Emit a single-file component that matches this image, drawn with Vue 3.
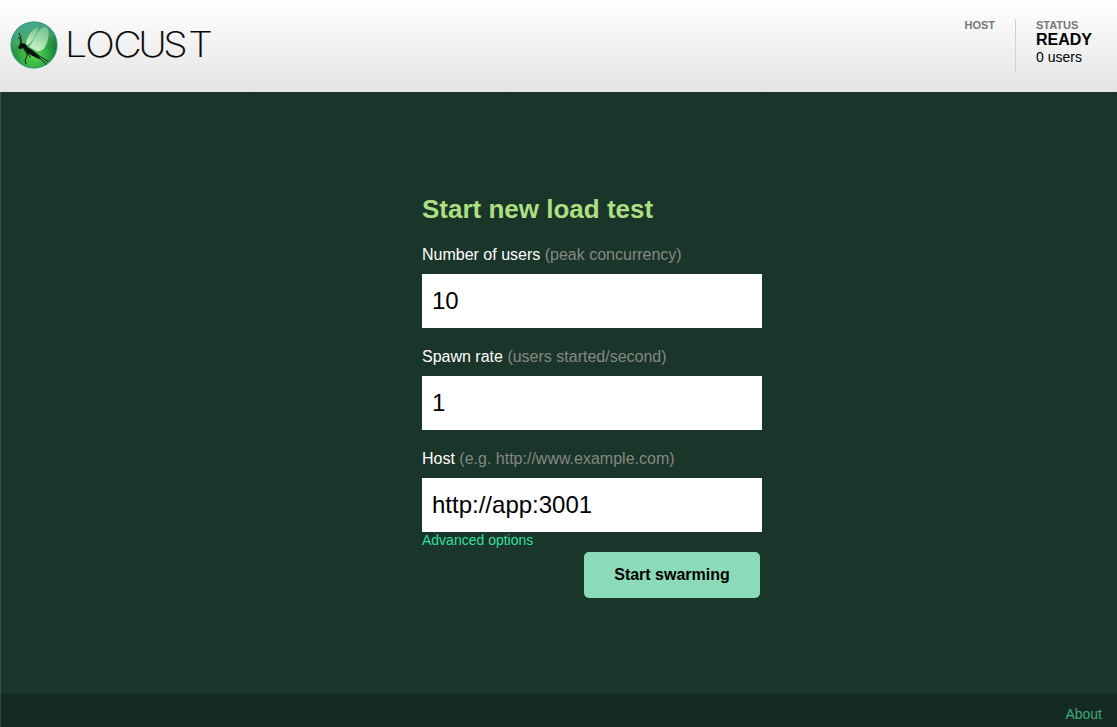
<script setup>
import { reactive } from 'vue'

const fields = reactive([
  { id: 'users', label: 'Number of users', hint: '(peak concurrency)', value: '10' },
  { id: 'rate', label: 'Spawn rate', hint: '(users started/second)', value: '1' },
  { id: 'host', label: 'Host', hint: '(e.g. http://www.example.com)', value: 'http://app:3001' },
])
</script>

<template>
  <div class="page">
    <header class="top">
      <svg class="logo" width="204" height="52" viewBox="0 0 204 52" role="img" aria-label="Locust">
        <defs>
          <radialGradient id="orb" cx="0.5" cy="0.72" r="0.68">
            <stop offset="0" stop-color="#58d850" />
            <stop offset="0.4" stop-color="#35ae43" />
            <stop offset="0.75" stop-color="#187b35" />
            <stop offset="1" stop-color="#0c5a3c" />
          </radialGradient>
          <linearGradient id="sheen" x1="0.3" y1="0" x2="0.55" y2="1">
            <stop offset="0" stop-color="#48b9aa" stop-opacity="0.9" />
            <stop offset="0.4" stop-color="#68bd7b" stop-opacity="0.55" />
            <stop offset="0.65" stop-color="#36b548" stop-opacity="0" />
          </linearGradient>
          <linearGradient id="wing" x1="0.7" y1="0" x2="0.3" y2="1">
            <stop offset="0" stop-color="#a9e3b6" stop-opacity="0.55" />
            <stop offset="1" stop-color="#dcf8dc" stop-opacity="0.9" />
          </linearGradient>
        </defs>
        <circle cx="24" cy="26" r="23.2" fill="url(#orb)" />
        <circle cx="24" cy="26" r="23.1" fill="url(#sheen)" stroke="#2b9c85" stroke-width="0.9" />
        <path d="M16 25C17 18.2 22 9.4 27 8.7C29.5 8.3 27.3 13.3 24.5 18C22 22 19 25.5 17.3 26.5Z" fill="url(#wing)" />
        <path d="M19 27.7C24.5 22.2 26.3 10.5 34 8.3C39.1 7.2 39.5 15.8 37.4 22.5C35.4 29.4 31.4 33.3 26.8 32Z" fill="url(#wing)" />
        <path d="M8.2 28.5L10 24.8L12.2 23.9L15.4 25L18 28.4L22.2 31L26.5 34.3L29.2 37.8L30.2 40.3L26.2 38.8L21.7 36.5L17.2 34L14.9 30.4L12.7 29L11 30L8.7 29.8Z" fill="#07120d" />
        <path d="M10.8 25.3C12 21.3 10.6 17 8.9 13.8M10.7 24.8C11 21.5 9.8 19.2 8.4 18M13.7 29.3L17.2 36L15.1 41.2L16 44.8M25.6 34.7L36.4 45.7M27 35.5L38.2 42.6M16.8 33L20.4 38.5" fill="none" stroke="#07120d" stroke-width="0.9" stroke-linejoin="round" />
        <text class="wordmark" y="38.5" transform="scale(1.12 1)" x="49.1 67.3 92.1 114.6 136.9 159.1">LOCUST</text>
      </svg>
      <div class="stats">
        <div class="stat"><div class="caption">HOST</div></div>
        <div class="stat status">
          <div class="caption">STATUS</div>
          <strong class="state">READY</strong>
          <div class="count">0 users</div>
        </div>
      </div>
    </header>
    <main class="content">
      <form class="start" @submit.prevent>
        <h2>Start new load test</h2>
        <div v-for="field in fields" :key="field.id" class="field">
          <label :for="field.id">{{ field.label }} <span>{{ field.hint }}</span></label>
          <input :id="field.id" v-model="field.value" type="text" autocomplete="off" spellcheck="false">
        </div>
        <a class="advanced" href="#">Advanced options</a>
        <button type="submit">Start swarming</button>
      </form>
    </main>
    <footer class="bottom"><a href="#">About</a></footer>
  </div>
</template>

<style>
body { margin: 0; background: #1a3529; }
</style>

<style scoped>
.page {
  display: flex;
  flex-direction: column;
  height: 100vh;
  overflow: hidden;
  font-family: "Liberation Sans", Arial, sans-serif;
  color: #fff;
  box-sizing: border-box;
}
.top {
  display: flex;
  justify-content: space-between;
  flex: 0 0 92px;
  height: 92px;
  box-sizing: border-box;
  padding: 19px 25px 0 10px;
  background: linear-gradient(#fff, #e4e4e4);
  color: #000;
}
.logo { display: block; overflow: visible; }
.wordmark { font-family: Inter, Lato, sans-serif; font-size: 35px; font-weight: 200; fill: #080808; stroke: #080808; stroke-width: 0.2; }
.stats { display: flex; height: 53px; }
.stat { padding-right: 20px; }
.status { border-left: 1px solid #d0d0d0; padding: 0 0 0 20px; width: 56px; }
.caption { font-size: 11px; font-weight: bold; line-height: 12px; color: #777; }
.state { display: block; font-size: 16px; line-height: 18px; }
.count { font-size: 14px; line-height: 17px; }
.content {
  display: flex;
  justify-content: center;
  flex: 1;
  border-left: 1px solid #3c5449;
  background: #1a3529;
}
.start { display: flex; flex-direction: column; width: 340px; margin: 102px 0 0 66px; }
h2 { margin: 0 0 22px; font-size: 26px; line-height: 30px; color: #addf82; }
.field { display: flex; flex-direction: column; margin-bottom: 20px; }
.field:last-of-type { margin-bottom: 0; }
label { font-size: 16px; line-height: 18px; margin-bottom: 10px; }
label span { color: #858885; }
input {
  height: 54px;
  box-sizing: border-box;
  border: 0;
  border-radius: 0;
  padding: 0 10px;
  background: #fff;
  color: #000;
  font: 24px "Liberation Sans", Arial, sans-serif;
  outline: 0;
}
.advanced { align-self: flex-start; font-size: 14px; line-height: 16px; color: #33dfa0; text-decoration: none; }
button {
  align-self: flex-end;
  width: 176px;
  height: 46px;
  margin: 4px 2px 0 0;
  padding: 0;
  border: 0;
  border-radius: 5px;
  background: #8bdab9;
  color: #000;
  font: bold 16px "Liberation Sans", Arial, sans-serif;
}
.bottom {
  flex: 0 0 33px;
  box-sizing: border-box;
  padding: 12px 15px 0 0;
  border-left: 1px solid #33483e;
  background: #152b21;
  text-align: right;
  font-size: 14px;
  line-height: 16px;
}
.bottom a { color: #43a67f; text-decoration: none; }
</style>
